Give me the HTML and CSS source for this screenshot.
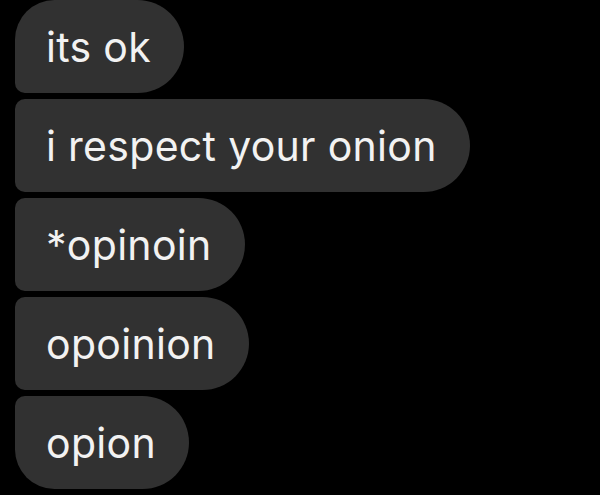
FILE: index.html
```html
<!DOCTYPE html>
<html lang="en">
<head>
  <meta charset="UTF-8">
  <meta name="viewport" content="width=device-width, initial-scale=1.0">
  <title>Messages</title>
  <link rel="stylesheet" href="styles.css">
</head>
<body>
  <!-- Group of received messages -->
  <div class="thread">
    <div class="bubble first">its ok</div>
    <div class="bubble">i respect your onion</div>
    <div class="bubble">*opinoin</div>
    <div class="bubble">opoinion</div>
    <div class="bubble last">opion</div>
  </div>
</body>
</html>
```

FILE: styles.css
```css
body {
  margin: 0;
  background: #000;
  font-family: Inter, "Liberation Sans", sans-serif;
}
.thread {
  display: flex;
  flex-direction: column;
  align-items: flex-start;
  gap: 6px;
  padding-left: 15px;
}
.bubble {
  height: 93px;
  display: flex;
  align-items: center;
  padding: 0 33px 0 31px;
  background-color: #313131;
  color: #f2f2f2;
  font-size: 41px;
  letter-spacing: 0.3px;
  border-radius: 10px 47px 47px 10px;
  box-sizing: border-box;
}
.first {
  border-top-left-radius: 40px;
}
.last {
  border-bottom-left-radius: 40px;
}
```
